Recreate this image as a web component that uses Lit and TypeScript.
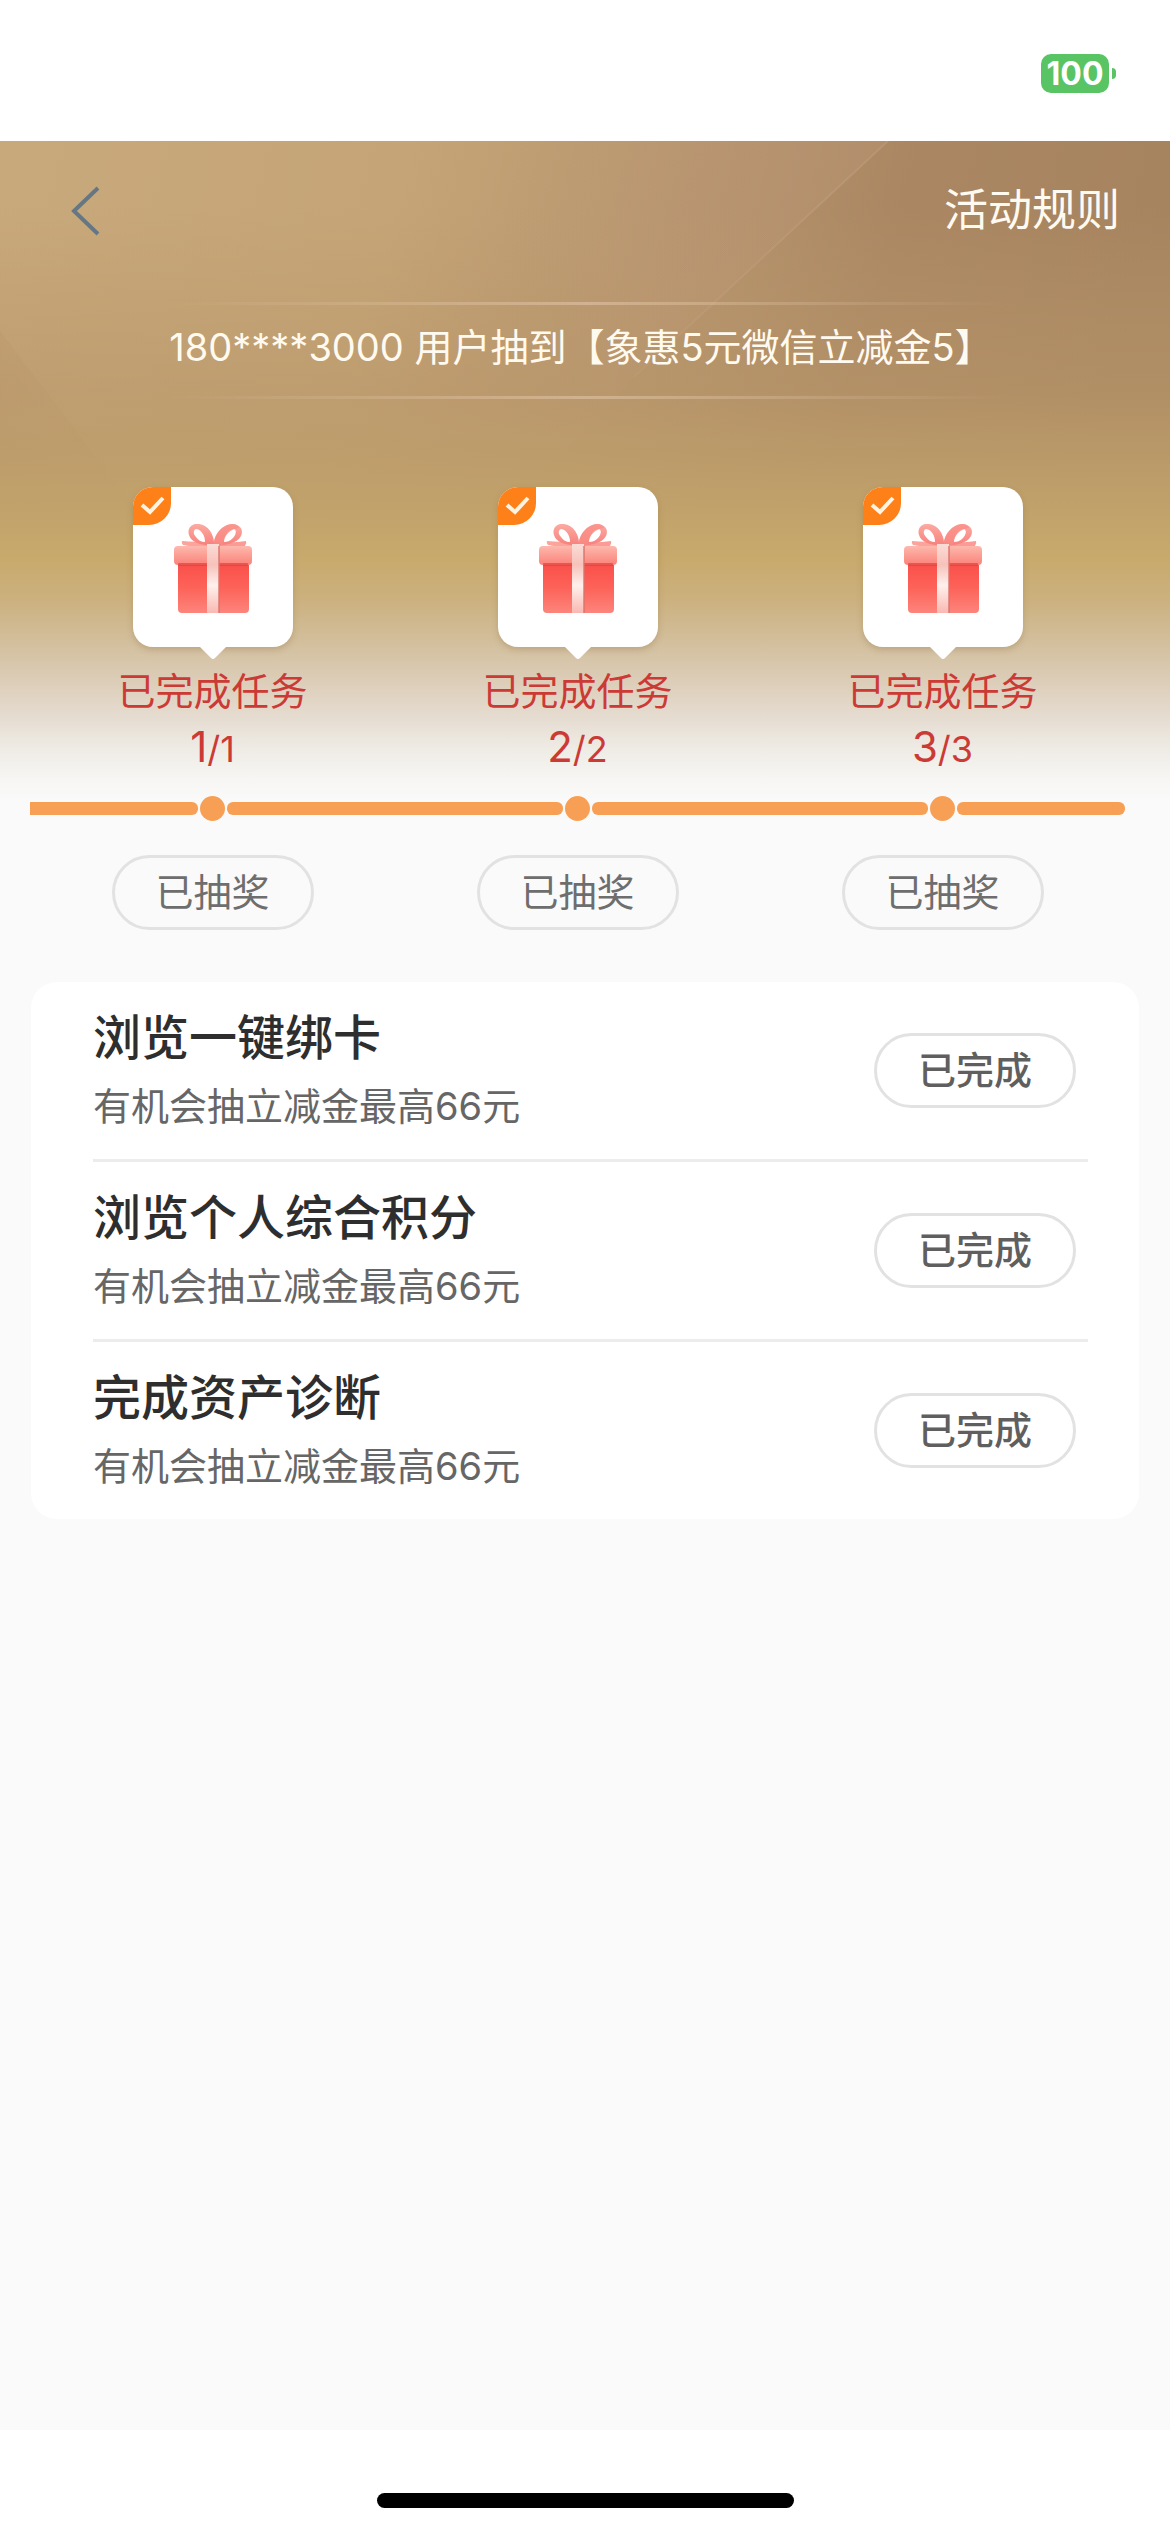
import { LitElement, html, css, svg } from "lit";
import { customElement, property } from "lit/decorators.js";

interface Stage {
  done: number;
  total: number;
}

interface Task {
  title: string;
  note: string;
}

const STAGES: Stage[] = [
  { done: 1, total: 1 },
  { done: 2, total: 2 },
  { done: 3, total: 3 },
];

const TASKS: Task[] = [
  { title: "浏览一键绑卡", note: "有机会抽立减金最高66元" },
  { title: "浏览个人综合积分", note: "有机会抽立减金最高66元" },
  { title: "完成资产诊断", note: "有机会抽立减金最高66元" },
];

const giftArt = svg`
  <defs>
    <linearGradient id="box" x1="0" y1="0" x2="0" y2="1">
      <stop offset="0" stop-color="#f84a46" />
      <stop offset="0.55" stop-color="#fd6258" />
      <stop offset="1" stop-color="#fc857c" />
    </linearGradient>
    <linearGradient id="lid" x1="0" y1="0" x2="0" y2="1">
      <stop offset="0" stop-color="#fdb8ae" />
      <stop offset="1" stop-color="#fb8278" />
    </linearGradient>
    <linearGradient id="band" x1="0" y1="0" x2="0" y2="1">
      <stop offset="0" stop-color="#fbdcd6" />
      <stop offset="0.3" stop-color="#f6c2ba" />
      <stop offset="0.6" stop-color="#fff0ec" />
      <stop offset="1" stop-color="#f9b9b2" />
    </linearGradient>
    <linearGradient id="bow" x1="0" y1="0" x2="0" y2="1">
      <stop offset="0" stop-color="#fcaaa2" />
      <stop offset="1" stop-color="#f87f7a" />
    </linearGradient>
  </defs>
  <path d="M8 17 Q20 18 38 18 L38 23 Q20 23 9 21 Q7 19 8 17 Z" fill="#faa49c" />
  <path d="M72 17 Q60 19 40 18 L40 23 Q58 23 71 22 Q73 19 72 17 Z" fill="#fa9c95" />
  <path fill-rule="evenodd" d="M40 22 C41 12 35 1 25 0 C17 -1 13 5 15 11 C17 18 25 21 40 22 Z M31 18 C31 12 28 6 22 5 C19 6 19 10 22 13 C24 16 27 18 31 18 Z" fill="url(#bow)" />
  <path fill-rule="evenodd" d="M40 22 C39 12 47 1 58 0 C66 0 70 6 67 12 C63 19 54 21 40 22 Z M50 18 C50 12 54 6 60 5 C63 6 62 11 59 14 C56 17 53 18 50 18 Z" fill="url(#bow)" />
  <path d="M40 22 C39 12 47 1 58 0 C62 0 64 2 65 4 C56 5 50 11 49 21 Z" fill="#f98b85" opacity="0.7" />
  <rect x="4" y="32" width="71" height="57" rx="4" fill="url(#box)" />
  <rect x="0" y="22" width="78" height="19" rx="4" fill="url(#lid)" />
  <rect x="4" y="39" width="70" height="3" rx="1" fill="#e2403c" opacity="0.7" />
  <path d="M33 20 H45 V89 H33 Z" fill="url(#band)" />
  <rect x="44" y="22" width="2" height="67" fill="#d9736c" opacity="0.7" />
`;

@customElement("status-bar")
class StatusBar extends LitElement {
  static styles = css`
    :host {
      display: flex;
      justify-content: flex-end;
      align-items: flex-start;
      box-sizing: border-box;
      height: 141px;
      padding: 54px 54px 0 0;
      background: #ffffff;
    }
    .battery {
      display: flex;
      align-items: center;
      gap: 3px;
    }
    .cell {
      display: flex;
      align-items: center;
      justify-content: center;
      width: 68px;
      height: 39px;
      border-radius: 10px;
      background: #58c464;
      color: #ffffff;
      font: 700 32px/39px Inter, "Liberation Sans", sans-serif;
    }
    .nub {
      width: 4px;
      height: 11px;
      border-radius: 0 6px 6px 0;
      background: #58c464;
    }
  `;

  render() {
    return html`
      <div class="battery">
        <span class="cell">100</span>
        <span class="nub"></span>
      </div>
    `;
  }
}

@customElement("reward-stage")
class RewardStage extends LitElement {
  @property({ type: Number }) done = 0;
  @property({ type: Number }) total = 0;
  @property({ type: Boolean, reflect: true }) last = false;

  static styles = css`
    :host {
      display: flex;
      flex-direction: column;
      align-items: center;
      flex: 1;
      min-width: 0;
    }
    .gift {
      position: relative;
      display: flex;
      align-items: center;
      justify-content: center;
      box-sizing: border-box;
      width: 160px;
      height: 160px;
      padding-top: 4px;
      border-radius: 20px;
      background: #ffffff;
      box-shadow: 0 3px 6px rgba(140, 105, 60, 0.3);
    }
    .picture {
      width: 78px;
      height: 90px;
    }
    .tick {
      position: absolute;
      top: 0;
      left: 0;
      width: 38px;
      height: 38px;
    }
    .tail {
      position: absolute;
      top: 100%;
      left: 50%;
      width: 28px;
      height: 13px;
      margin: -1px 0 0 -14px;
    }
    .label {
      margin-top: 22px;
      color: #cc3a35;
      font-size: 38px;
      line-height: 44px;
      white-space: nowrap;
    }
    .count {
      margin-top: 10px;
      color: #cc3a35;
      font-size: 36px;
      line-height: 48px;
    }
    .current {
      font-size: 42px;
    }
    .track {
      display: flex;
      align-items: center;
      gap: 2px;
      align-self: stretch;
      margin-top: 23px;
    }
    .line {
      flex: 1;
      height: 13px;
      background: #f7a055;
    }
    .before {
      border-radius: 0 6px 6px 0;
    }
    .after {
      border-radius: 6px 0 0 6px;
    }
    :host([last]) .after {
      border-radius: 6px;
    }
    .dot {
      width: 25px;
      height: 25px;
      border-radius: 50%;
      background: #f7a055;
    }
    .draw {
      box-sizing: border-box;
      width: 202px;
      height: 75px;
      margin-top: 34px;
      padding: 0 0 6px;
      border: 3px solid #e2e2e2;
      border-radius: 38px;
      background: transparent;
      color: #6e6e6e;
      font: inherit;
      font-size: 38px;
    }
  `;

  render() {
    return html`
      <div class="gift">
        <svg class="picture" viewBox="0 0 78 90" aria-hidden="true">${giftArt}</svg>
        <svg class="tick" viewBox="0 0 38 38" aria-hidden="true">
          <path d="M0 38 V20 A20 20 0 0 1 20 0 H38 V16 A22 22 0 0 1 16 38 Z" fill="#fd8019" />
          <path d="M9 18 L17 25 L30 11" fill="none" stroke="#fff3e2" stroke-width="4" />
        </svg>
        <svg class="tail" viewBox="0 0 28 13" aria-hidden="true">
          <path d="M0 0 H28 L16 12 Q14 14 12 12 Z" fill="#ffffff" />
        </svg>
      </div>
      <div class="label">已完成任务</div>
      <div class="count"><span class="current">${this.done}</span>/${this.total}</div>
      <div class="track">
        <span class="line before"></span>
        <span class="dot"></span>
        <span class="line after"></span>
      </div>
      <button class="draw" type="button">已抽奖</button>
    `;
  }
}

@customElement("task-row")
class TaskRow extends LitElement {
  @property() heading = "";
  @property() note = "";

  static styles = css`
    :host {
      display: flex;
      align-items: center;
      justify-content: space-between;
      box-sizing: border-box;
      min-height: 177px;
      padding-right: 12px;
    }
    .title {
      margin: 0;
      color: #2e2e2e;
      font-size: 48px;
      font-weight: 500;
      line-height: 64px;
    }
    .note {
      margin: 0;
      padding: 8px 0 2px;
      color: #666666;
      font-size: 38px;
      line-height: 56px;
    }
    .state {
      box-sizing: border-box;
      width: 202px;
      height: 75px;
      padding: 0 0 6px;
      border: 3px solid #e2e2e2;
      border-radius: 38px;
      background: #ffffff;
      color: #5f5f5f;
      font: inherit;
      font-size: 38px;
      font-weight: 500;
    }
  `;

  render() {
    return html`
      <div class="text">
        <h2 class="title">${this.heading}</h2>
        <p class="note">${this.note}</p>
      </div>
      <button class="state" type="button">已完成</button>
    `;
  }
}

@customElement("app-root")
class AppRoot extends LitElement {
  static styles = css`
    :host {
      display: flex;
      flex-direction: column;
      min-height: 100vh;
      background: #fafafa;
      font-family: Inter, "Noto Sans CJK SC", sans-serif;
    }
    .hero {
      position: relative;
      display: flex;
      flex-direction: column;
    }
    .backdrop {
      position: absolute;
      inset: 0 0 auto 0;
      width: 100%;
      height: 660px;
    }
    .nav {
      position: relative;
      display: flex;
      align-items: center;
      justify-content: space-between;
      height: 140px;
      padding: 0 50px 0 64px;
    }
    .back {
      display: flex;
      padding: 0;
      border: 0;
      background: none;
    }
    .chevron {
      width: 44px;
      height: 52px;
    }
    .rules {
      padding-bottom: 2px;
      color: #fffaf0;
      font-size: 44px;
      line-height: 60px;
      text-decoration: none;
    }
    .notice {
      position: relative;
      display: flex;
      flex-direction: column;
      margin-top: 21px;
    }
    .rule {
      height: 3px;
      background: linear-gradient(90deg, transparent 14%, rgba(230, 204, 176, 0.5) 50%, transparent 86%);
    }
    .winner {
      margin: 0;
      padding: 0 8px 6px 0;
      color: #fffaf0;
      font-size: 38px;
      line-height: 85px;
      text-align: center;
      white-space: nowrap;
    }
    .stages {
      position: relative;
      display: flex;
      margin-top: 88px;
      padding: 0 45px 0 30px;
    }
    .tasks {
      margin: 52px 31px 0;
      padding: 0 51px 0 62px;
      border-radius: 26px;
      background: #ffffff;
    }
    .task {
      display: block;
    }
    .task + .task {
      border-top: 3px solid #ececec;
    }
    .home {
      display: flex;
      justify-content: center;
      margin-top: auto;
      padding: 63px 0 24px;
      background: #ffffff;
    }
    .handle {
      width: 417px;
      height: 15px;
      border-radius: 8px;
      background: #000000;
    }
    .list {
      margin: 0;
      padding: 0;
      list-style: none;
    }
  `;

  render() {
    return html`
      <status-bar></status-bar>
      <main class="hero">
        <svg class="backdrop" viewBox="0 0 1170 660" preserveAspectRatio="none" aria-hidden="true">
          <defs>
            <linearGradient id="base" gradientUnits="userSpaceOnUse" x1="0" y1="0" x2="1100" y2="300">
              <stop offset="0" stop-color="#c8a97b" />
              <stop offset="0.35" stop-color="#c5a577" />
              <stop offset="0.6" stop-color="#b6946d" />
              <stop offset="0.78" stop-color="#aa8762" />
              <stop offset="1" stop-color="#a6845f" />
            </linearGradient>
            <linearGradient id="fade" x1="0" y1="0" x2="0" y2="1">
              <stop offset="0.1" stop-color="#bb986c" stop-opacity="0" />
              <stop offset="0.38" stop-color="#b9976a" stop-opacity="0.6" />
              <stop offset="0.5" stop-color="#be9e6a" stop-opacity="0.9" />
              <stop offset="0.58" stop-color="#c3a46b" />
              <stop offset="0.635" stop-color="#c8aa6d" />
              <stop offset="0.695" stop-color="#ccb17f" />
              <stop offset="0.756" stop-color="#d2be9b" />
              <stop offset="0.817" stop-color="#dccdb8" />
              <stop offset="0.877" stop-color="#e6ddd2" />
              <stop offset="0.923" stop-color="#efece6" />
              <stop offset="0.968" stop-color="#f7f6f4" />
              <stop offset="1" stop-color="#fafafa" />
            </linearGradient>
            <linearGradient id="beam" gradientUnits="userSpaceOnUse" x1="480" y1="60" x2="720" y2="160">
              <stop offset="0" stop-color="#c09a7c" stop-opacity="0" />
              <stop offset="1" stop-color="#c09a7c" stop-opacity="0.3" />
            </linearGradient>
            <linearGradient id="shade" gradientUnits="userSpaceOnUse" x1="0" y1="340" x2="120" y2="250">
              <stop offset="0" stop-color="#b08a62" stop-opacity="0.35" />
              <stop offset="1" stop-color="#b08a62" stop-opacity="0.1" />
            </linearGradient>
          </defs>
          <rect width="1170" height="660" fill="url(#base)" />
          <path d="M0 190 L160 400 H0 Z" fill="url(#shade)" />
          <path d="M888 0 L746 132 L634 236 L500 380 H200 L500 0 Z" fill="url(#beam)" />
          <path d="M888 0 L746 132 L634 236" fill="none" stroke="#c8a68a" stroke-opacity="0.35" stroke-width="2" />
          <rect width="1170" height="660" fill="url(#fade)" />
        </svg>
        <nav class="nav">
          <button class="back" type="button" aria-label="返回">
            <svg class="chevron" viewBox="0 0 44 52" aria-hidden="true">
              <path d="M34 3 L10 26 L34 49" fill="none" stroke="#667784" stroke-width="4" />
            </svg>
          </button>
          <a class="rules" href="#rules">活动规则</a>
        </nav>
        <section class="notice">
          <div class="rule"></div>
          <p class="winner">180****3000 用户抽到【象惠5元微信立减金5】</p>
          <div class="rule"></div>
        </section>
        <section class="stages">
          ${STAGES.map(
            (s, i) => html`<reward-stage
              .done=${s.done}
              .total=${s.total}
              ?last=${i === STAGES.length - 1}
            ></reward-stage>`
          )}
        </section>
      </main>
      <section class="tasks">
        <ul class="list">
          ${TASKS.map(
            (t) => html`<li class="task"><task-row .heading=${t.title} .note=${t.note}></task-row></li>`
          )}
        </ul>
      </section>
      <footer class="home"><div class="handle"></div></footer>
    `;
  }
}
